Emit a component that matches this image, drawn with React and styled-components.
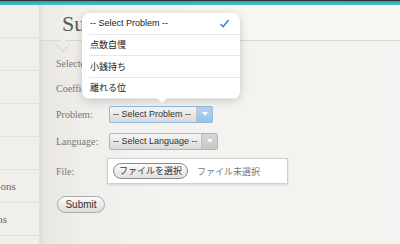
import styled, { createGlobalStyle } from "styled-components";

const GlobalStyle = createGlobalStyle`
  html, body {
    margin: 0;
    padding: 0;
    width: 400px;
    height: 244px;
    overflow: hidden;
    background: #f4f3f0;
  }
  * {
    box-sizing: border-box;
  }
`;

const navItems = ["Home", "Problems", "Ranking", "Status", "Contest", "My Submissions", "Past Questions", "Help"];
const problems = ["点数自慢", "小銭持ち", "離れる位"];

function App() {
  return (
    <>
      <GlobalStyle />
      <Page>
        <TopBar />
        <Body>
          <Sidebar>
            <Nav>
              {navItems.map((item) => (
                <NavItem key={item}>{item}</NavItem>
              ))}
            </Nav>
          </Sidebar>
          <Main>
            <Header>
              <Title>Submit</Title>
            </Header>
            <Form>
              <Row $height={23}>
                <Label>Selected Problem:</Label>
              </Row>
              <Row $height={26}>
                <Label>Coefficient:</Label>
              </Row>
              <Row $height={26}>
                <Label>Problem:</Label>
                <Select $focused $width={104}>
                  <SelectText>-- Select Problem --</SelectText>
                  <Arrow $focused />
                </Select>
              </Row>
              <Row $height={28}>
                <Label>Language:</Label>
                <Select $width={109}>
                  <SelectText>-- Select Language --</SelectText>
                  <Arrow />
                </Select>
              </Row>
              <Row $height={32}>
                <Label>File:</Label>
                <FileBox>
                  <FileButton>ファイルを選択</FileButton>
                  <FileName>ファイル未選択</FileName>
                </FileBox>
              </Row>
              <SubmitButton>Submit</SubmitButton>
            </Form>
          </Main>
        </Body>
        <Popup>
          <PopupItem>
            -- Select Problem --
            <Check viewBox="0 0 12 10">
              <path d="M1.5 5.5 L4.5 8.5 L10.5 1.2" fill="none" stroke="#2d7be5" strokeWidth="1.6" />
            </Check>
          </PopupItem>
          {problems.map((p) => (
            <PopupItem key={p}>{p}</PopupItem>
          ))}
          <Pointer />
        </Popup>
      </Page>
    </>
  );
}

const Page = styled.div`
  position: relative;
  width: 400px;
  height: 244px;
  overflow: hidden;
  font-family: "Liberation Serif", "Noto Sans CJK JP", serif;
`;

const TopBar = styled.div`
  height: 5px;
  border-top: 1px solid #2e3436;
  background: linear-gradient(#2f9ea6, #47c6cf);
`;

const Body = styled.div`
  display: flex;
  height: 239px;
`;

const Sidebar = styled.div`
  width: 40px;
  flex-shrink: 0;
  display: flex;
  justify-content: flex-end;
  overflow: hidden;
  background: #f1efe9;
  border-right: 1px solid #e2e0da;
  box-shadow: 1px 0 3px rgba(0, 0, 0, 0.06);
  z-index: 1;
`;

const Nav = styled.div`
  width: 140px;
  flex-shrink: 0;
`;

const NavItem = styled.div`
  height: 33px;
  line-height: 33px;
  padding-left: 43px;
  border-bottom: 1px solid #e3e1db;
  font-size: 11px;
  color: #666;
  white-space: nowrap;
`;

const Main = styled.div`
  flex: 1;
  background: linear-gradient(90deg, #e7e5e0 0px, #efeeea 40px, #f4f3f0 120px, #f4f3f1 100%);
`;

const Header = styled.div`
  position: relative;
  height: 36px;
  padding-left: 22px;
  background: linear-gradient(90deg, #eceae5 0px, #f5f4f0 60px, #f8f7f3 100%);
  border-bottom: 1px solid #d9d7d1;

  &::after {
    content: "";
    position: absolute;
    left: 18px;
    top: 35px;
    width: 9px;
    height: 9px;
    background: #eeece7;
    border-right: 1px solid #d9d7d1;
    border-bottom: 1px solid #d9d7d1;
    transform: rotate(45deg);
  }
`;

const Title = styled.h1`
  margin: 0;
  padding-top: 6px;
  font-size: 22px;
  font-weight: normal;
  color: #595959;
`;

const Form = styled.div`
  padding: 11px 0 0 16px;
`;

const Row = styled.div`
  display: flex;
  align-items: center;
  height: ${(p) => p.$height}px;
`;

const Label = styled.div`
  width: 53px;
  flex-shrink: 0;
  font-size: 10px;
  color: #777;
  white-space: nowrap;
`;

const Select = styled.div`
  display: flex;
  width: ${(p) => p.$width}px;
  height: 17px;
  border: 1px solid ${(p) => (p.$focused ? "#8fb8e2" : "#b4b4b4")};
  border-radius: 2px;
  background: linear-gradient(#f6f6f6, #d9d9d9);
  font-family: "Liberation Sans", sans-serif;
  overflow: hidden;
`;

const SelectText = styled.div`
  flex: 1;
  padding-left: 3px;
  font-size: 9px;
  line-height: 15px;
  color: #333;
  white-space: nowrap;
  border-right: 1px solid #c4c4c4;
`;

const Arrow = styled.div`
  width: 15px;
  display: flex;
  align-items: center;
  justify-content: center;
  background: ${(p) => (p.$focused ? "linear-gradient(#b3d2ef, #9cc1e6)" : "linear-gradient(#d6d6d6, #c6c6c6)")};

  &::before {
    content: "";
    border-left: 3px solid transparent;
    border-right: 3px solid transparent;
    border-top: 4px solid #fff;
  }
`;

const FileBox = styled.div`
  display: flex;
  align-items: center;
  width: 181px;
  height: 26px;
  margin-left: -2px;
  padding-left: 5px;
  background: #fff;
  border: 1px solid #cfcfcf;
  box-shadow: 0 1px 2px rgba(0, 0, 0, 0.12);
  font-family: "Noto Sans CJK JP", sans-serif;
`;

const FileButton = styled.div`
  height: 16px;
  padding: 0 5px;
  border: 1px solid #8a8a8a;
  border-radius: 8px;
  background: linear-gradient(#fdfdfd, #dedede);
  font-size: 9px;
  line-height: 14px;
  color: #333;
  white-space: nowrap;
`;

const FileName = styled.div`
  margin-left: 9px;
  font-size: 9px;
  color: #777;
  white-space: nowrap;
`;

const SubmitButton = styled.button`
  display: block;
  margin-top: 9px;
  margin-left: 1px;
  width: 48px;
  height: 17px;
  padding: 0;
  border: 1px solid #a9a9a9;
  border-radius: 9px;
  background: linear-gradient(#fbfbfb, #dcdcdc);
  font-family: "Liberation Sans", sans-serif;
  font-size: 10px;
  color: #333;
`;

const Popup = styled.div`
  position: absolute;
  left: 82px;
  top: 13px;
  width: 158px;
  padding: 0 0 0 7px;
  background: #fff;
  border-radius: 8px;
  box-shadow: 0 2px 10px rgba(0, 0, 0, 0.18);
  font-family: "Liberation Sans", "Noto Sans CJK JP", sans-serif;
  z-index: 5;
`;

const PopupItem = styled.div`
  display: flex;
  align-items: center;
  justify-content: space-between;
  height: 21.5px;
  padding: 0 10px 0 1px;
  font-size: 9px;
  color: #222;
  border-bottom: 1px solid #e8e8e8;

  &:last-of-type {
    border-bottom: none;
  }
`;

const Check = styled.svg`
  width: 11px;
  height: 9px;
`;

const Pointer = styled.div`
  position: absolute;
  left: 75px;
  bottom: -4px;
  border-left: 5px solid transparent;
  border-right: 5px solid transparent;
  border-top: 5px solid #fff;
`;

export default App;
